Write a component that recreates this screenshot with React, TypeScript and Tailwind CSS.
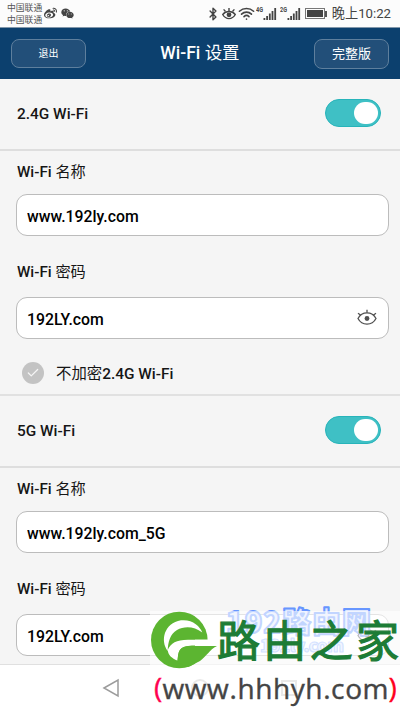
import React, { useState } from 'react';
import { Bluetooth, Wifi, Check } from 'lucide-react';
import { FaWeibo, FaWeixin } from 'react-icons/fa';

interface SignalProps {
  label: string;
}

const SignalBars: React.FC<SignalProps> = ({ label }) => (
  <svg width="21" height="15" viewBox="0 0 21 15" className="shrink-0 text-[#444]" fill="currentColor">
    <text x="0" y="6" fontSize="6.5" fontWeight="700" textLength="7" lengthAdjust="spacingAndGlyphs" className="font-['Roboto',sans-serif]">
      {label}
    </text>
    <rect x="7.5" y="12" width="1.8" height="2" />
    <rect x="10.2" y="10" width="1.8" height="4" />
    <rect x="12.9" y="7.5" width="1.8" height="6.5" />
    <rect x="15.6" y="5" width="1.8" height="9" />
    <rect x="18.3" y="2" width="1.8" height="12" />
  </svg>
);

const LashEye = () => (
  <svg width="20" height="17" viewBox="0 0 20 17" fill="none" stroke="#505050" strokeWidth="1.3" className="mb-0.5">
    <path d="M1 9.5C5 2 15 2 19 9.5C15 17 5 17 1 9.5Z" />
    <path d="M10 3.7V.8M3.8 6.2L1 4.2M16.2 6.2L19 4.2" />
    <circle cx="10" cy="9.5" r="2.4" fill="#505050" stroke="none" />
  </svg>
);

const StatusBar = () => (
  <div className="flex h-[27px] shrink-0 items-center bg-[#fcfcfc] pl-[7px] text-[#444]">
    <div className="w-[37px] text-[8.8px] leading-[12px] whitespace-nowrap text-[#555]">
      <p>中国联通</p>
      <p>中国联通</p>
    </div>
    <FaWeibo size={13} />
    <FaWeixin size={13} className="ml-1" />
    <div className="ml-auto flex items-center pr-[9px]">
      <Bluetooth size={14} strokeWidth={2.4} />
      {/* eye comfort mode */}
      <svg width="14" height="13" viewBox="0 0 14 13" fill="none" stroke="currentColor" strokeWidth="1.4" className="ml-0.5">
        <path d="M.7 7.5C4 3.5 10 3.5 13.3 7.5C10 13 4 13 .7 7.5Z" />
        <path d="M7 4V1M3.5 4.5L1.6 2.4M10.5 4.5L12.4 2.4" />
        <circle cx="7" cy="7.8" r="2.4" fill="currentColor" stroke="none" />
      </svg>
      <Wifi size={17} strokeWidth={2.3} className="mr-px ml-0.5" />
      <SignalBars label="4G" />
      <span className="w-[3px]" />
      <SignalBars label="2G" />
      <div className="ml-1 flex h-[11px] w-[20px] border border-[#777] p-px">
        <div className="w-[16px] bg-[#444]" />
      </div>
      <div className="h-[6px] w-[2px] bg-[#555]" />
      <span className="ml-[5px] text-[13.2px] leading-5 whitespace-nowrap">晚上10:22</span>
    </div>
  </div>
);

const Header = () => (
  <header className="flex h-[52px] shrink-0 items-center justify-between border-t border-[#8197aa] bg-[#0c406e] pr-[11px] pl-[11px] text-white">
    <button className="h-[29px] w-[75px] rounded-[8px] border border-[#5e7f9d] bg-[#224f79] text-[10px]">退出</button>
    <h1 className="text-[17.5px] font-medium whitespace-nowrap">
      Wi-Fi <span className="font-normal">设置</span>
    </h1>
    <button className="h-[30px] w-[75px] rounded-[8px] border border-[#5e7f9d] bg-[#224f79] text-[13px]">完整版</button>
  </header>
);

const Toggle = () => {
  const [on, setOn] = useState(true);
  return (
    <button
      onClick={() => setOn(!on)}
      className={`mb-0.5 flex h-[28px] w-[56px] items-center rounded-full border px-[2px] ${
        on ? 'justify-end border-[#27b4ba] bg-[#3fc0c5]' : 'justify-start border-gray-300 bg-gray-300'
      }`}
    >
      <span className="h-[22px] w-[24px] rounded-full bg-white" />
    </button>
  );
};

interface FieldProps {
  label: string;
  initial: string;
  password?: boolean;
}

const Field: React.FC<FieldProps> = ({ label, initial, password }) => {
  const [value, setValue] = useState(initial);
  return (
    <label className="block">
      <span className="block h-[23px] pl-px text-[15.2px] leading-[23px]">
        <span className="font-medium">Wi-Fi</span> {label}
      </span>
      <span
        className={`flex h-[42px] items-center rounded-[11px] border border-[#bcbcbc] bg-white pr-[11px] pl-[10px] ${
          password ? 'mt-[13px]' : 'mt-[10px]'
        }`}
      >
        <input
          value={value}
          onChange={(e) => setValue(e.target.value)}
          className="min-w-0 flex-1 bg-transparent pt-[3px] text-[15.8px] font-medium text-black outline-none"
        />
        {password && <LashEye />}
      </span>
    </label>
  );
};

interface BandProps {
  name: string;
  ssid: string;
  open?: boolean;
}

const Band: React.FC<BandProps> = ({ name, ssid, open }) => (
  <section>
    <div className="flex h-[72px] items-center justify-between border-b-2 border-[#dedede] pr-[19px] pl-[17px] text-[15.4px] font-medium">
      <span className="pt-0.5">{name}</span>
      <Toggle />
    </div>
    <div className="flex flex-col gap-[25px] pt-[10px] pr-[11px] pl-[16px]">
      <Field label="名称" initial={ssid} />
      <Field label="密码" initial="192LY.com" password />
    </div>
    {open && (
      <div className="mt-[23px] flex h-[34px] items-start border-b-2 border-[#e1e1e1] pl-[22px]">
        <span className="flex h-[22px] w-[22px] items-center justify-center rounded-full bg-[#c3c3c3] text-[#f5f5f5]">
          <Check size={14} strokeWidth={2.2} />
        </span>
        <span className="ml-[12px] text-[15.4px] leading-[24px]">
          不加密<span className="font-medium">{name}</span>
        </span>
      </div>
    )}
  </section>
);

// Site logos lying over the lower right corner, the blue one under the white plate
const Watermark = () => (
  <div className="absolute top-[600px] left-[150px] h-[111px] w-[250px]">
    <svg width="250" height="111" viewBox="0 -5 250 111" className="absolute inset-0 overflow-visible">
      <g fill="#dde7ff" stroke="#6796ff" strokeLinejoin="round" className="font-['Noto_Sans_CJK_SC',sans-serif]" fontWeight="900">
        <text x="76" y="27.5" fontSize="29" textLength="145" strokeWidth="2">192路由网</text>
        <text x="110" y="47" fontSize="17" textLength="84" strokeWidth="1.2" stroke="#94b5ff">192ly.com</text>
      </g>
    </svg>
    <div className="absolute top-[11px] left-0 h-[100px] w-full bg-white/60" />
    <svg width="250" height="111" viewBox="0 -5 250 111" className="absolute inset-0">
      <circle cx="29.3" cy="35" r="28.3" fill="#5cb531" />
      <path d="M45 34.7H60V41.5H45Z" fill="#fff" />
      <path d="M17.7 46C10 36 14 18 31 15.3C42 14 50 21 52.3 27.5C44 21 34 21 27 25C20 29 18 37 17.7 46Z" fill="#fff" />
      <path d="M17.7 45C21 38 26 34.7 38 34.7H58L62 40.5C50 41 38 39 32 43C27.5 46 28.5 51 27.3 55.5C22 53.5 18 50 17.7 45Z" fill="#fff" />
      <path d="M28 58C27 45 31 41.2 39 41H67C59 45 57 51 50 56L38 62Z" fill="#5cb531" />
      <text x="67" y="51.5" fontSize="43" fontWeight="400" fill="#1d7c36" stroke="#1d7c36" strokeWidth="1.2" textLength="182" className="font-['Noto_Sans_CJK_SC',sans-serif]">路由之家</text>
      <g fontSize="28" className="font-['Open_Sans',sans-serif]">
        <text x="4" y="93" fill="#ff0050" stroke="#ff0050" strokeWidth=".4">(</text>
        <text x="12.5" y="94.3" fill="#444" stroke="#444" strokeWidth=".4" textLength="226">www.hhhyh.com</text>
        <text x="238.5" y="93" fill="#ff0020" stroke="#ff0020" strokeWidth=".4">)</text>
      </g>
    </svg>
  </div>
);

export default function App() {
  return (
    <div className="relative flex h-[711px] w-[400px] flex-col overflow-hidden bg-[#f5f5f5] font-['Roboto','Noto_Sans_CJK_SC',sans-serif] text-[#161616]">
      <StatusBar />
      <Header />
      <main className="h-[585px] shrink-0 overflow-hidden">
        <Band name="2.4G Wi-Fi" ssid="www.192ly.com" open />
        <Band name="5G Wi-Fi" ssid="www.192ly.com_5G" />
      </main>
      <nav className="flex h-[47px] shrink-0 items-center border-t border-[#e0e0e0] bg-white pl-[102px]">
        <svg width="18" height="20" viewBox="0 0 18 20" fill="none" stroke="#9c9c9c" strokeWidth="1.5">
          <path d="M2 10L16 2V18Z" />
        </svg>
        <span className="ml-[71px] h-[18px] w-[18px] rounded-full border-2 border-[#c8c8c8]" />
        <span className="ml-[72px] h-4 w-4 border-2 border-[#c8c8c8]" />
      </nav>
      <Watermark />
    </div>
  );
}
